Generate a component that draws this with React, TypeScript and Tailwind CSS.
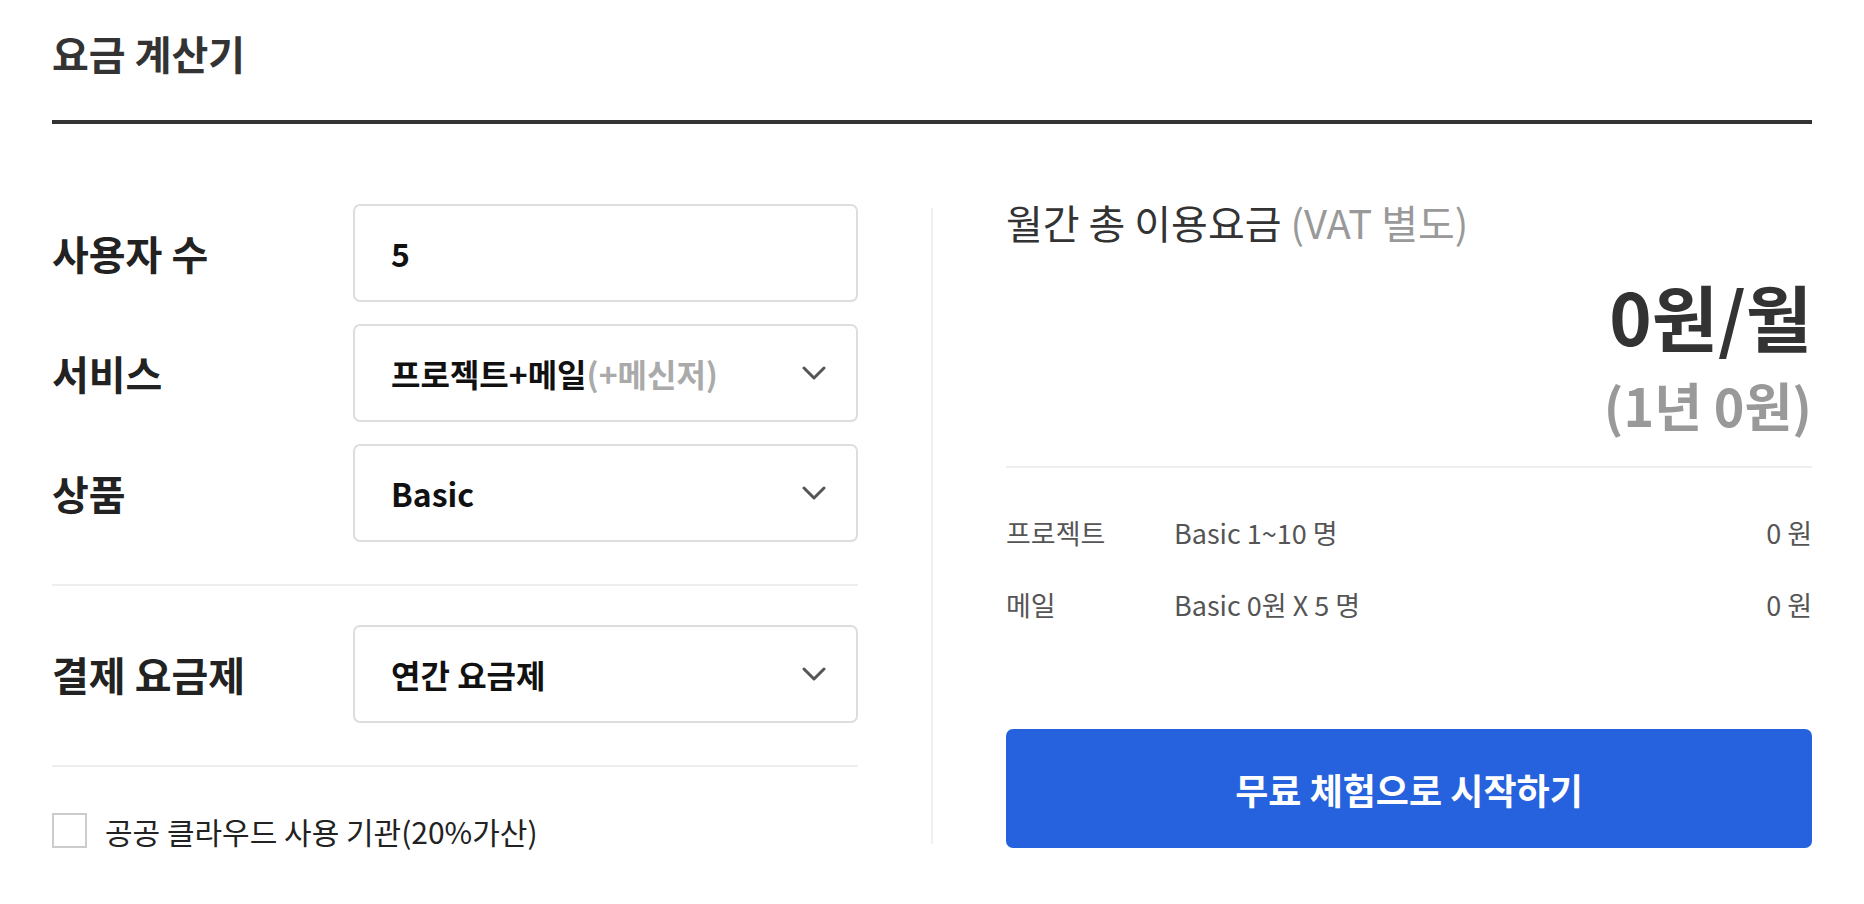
import React, { useState } from 'react';

const font = { fontFamily: '"Noto Sans CJK KR", "Noto Sans", sans-serif' };

const Chevron = () => (
    <svg width="24" height="15" viewBox="0 0 24 15" fill="none" className="shrink-0">
        <polyline points="2,2 12,12 22,2" stroke="#555" strokeWidth="3" strokeLinecap="round" strokeLinejoin="round" />
    </svg>
);

const Field: React.FC<{ label: string; select?: boolean; children: React.ReactNode }> = ({ label, select, children }) => (
    <div className="flex items-center">
        <div className="w-[301px] text-[40px] font-bold text-[#222] leading-none">{label}</div>
        <div className="w-[505px] h-[98px] border-2 border-[#dddddd] rounded-[7px] flex items-center justify-between pl-[36px] pr-[30px]">
            <div className="text-[32px] font-bold text-[#111] leading-none">{children}</div>
            {select && <Chevron />}
        </div>
    </div>
);

export default function App() {
    const [isPublic, setIsPublic] = useState(false);

    return (
        <div className="min-h-screen bg-white px-[52px] pt-[26px]" style={font}>
            {/* Header */}
            <h1 className="text-[40px] leading-[54px] font-bold text-[#333]">요금 계산기</h1>
            <div className="mt-[40px] h-[4px] bg-[#333]" />

            <div className="mt-[80px] flex">
                {/* Left: inputs */}
                <div className="w-[806px] flex flex-col">
                    <div className="flex flex-col gap-[22px]">
                        <Field label="사용자 수">5</Field>
                        <Field label="서비스" select>
                            프로젝트+메일<span className="text-[#aaa]">(+메신저)</span>
                        </Field>
                        <Field label="상품" select>Basic</Field>
                    </div>
                    <div className="mt-[42px] h-[2px] bg-[#eeeeee]" />
                    <div className="mt-[39px]">
                        <Field label="결제 요금제" select>연간 요금제</Field>
                    </div>
                    <div className="mt-[42px] h-[2px] bg-[#eeeeee]" />
                    <label className="mt-[46px] flex items-center gap-[18px] cursor-pointer">
                        <input
                            type="checkbox"
                            checked={isPublic}
                            onChange={(e) => setIsPublic(e.target.checked)}
                            className="appearance-none w-[35px] h-[35px] border-2 border-[#cccccc] bg-white shrink-0"
                        />
                        <span className="text-[30px] leading-none text-[#222]">공공 클라우드 사용 기관(20%가산)</span>
                    </label>
                </div>

                {/* Divider */}
                <div className="flex-1 flex justify-center py-[4px]">
                    <div className="w-[2px] bg-[#f0f0f0]" />
                </div>

                {/* Right: summary */}
                <div className="w-[806px] flex flex-col">
                    <div className="text-[40px] leading-[36px] text-[#333]">
                        월간 총 이용요금 <span className="text-[#999]">(VAT 별도)</span>
                    </div>
                    <div className="mt-[35px] text-right text-[72px] leading-[80px] font-bold text-[#333]">0원/월</div>
                    <div className="mt-[20px] text-right text-[52px] leading-[60px] font-bold text-[#999]">(1년 0원)</div>
                    <div className="mt-[31px] h-[2px] bg-[#eeeeee]" />

                    <div className="mt-[47px] flex flex-col gap-[36px] text-[27px] leading-[36px] text-[#555]">
                        <div className="flex">
                            <span className="w-[168px]">프로젝트</span>
                            <span className="flex-1">Basic 1~10 명</span>
                            <span>0 원</span>
                        </div>
                        <div className="flex">
                            <span className="w-[168px]">메일</span>
                            <span className="flex-1">Basic 0원 X 5 명</span>
                            <span>0 원</span>
                        </div>
                    </div>

                    <button className="mt-auto h-[119px] w-full rounded-[7px] bg-[#2662de] text-white text-[36px] font-bold">
                        무료 체험으로 시작하기
                    </button>
                </div>
            </div>
        </div>
    );
}
